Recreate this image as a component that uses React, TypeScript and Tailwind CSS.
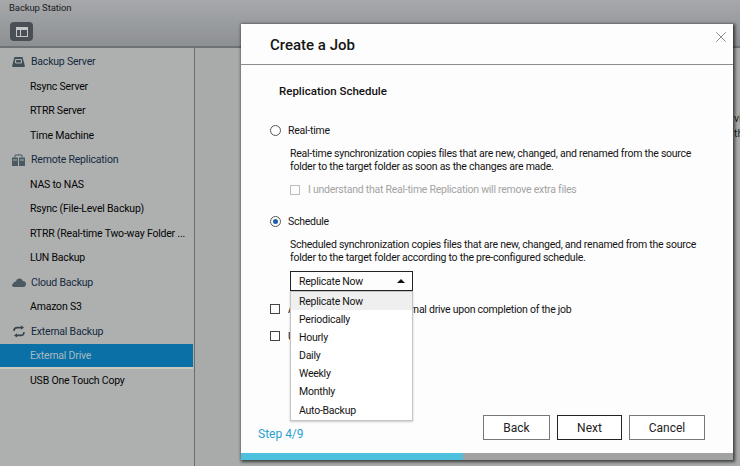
import { X } from "lucide-react";

const font = "font-['Roboto',sans-serif]";

function ServerIcon() {
  return (
    <svg width="13" height="10" viewBox="0 0 13 10" fill="none">
      <path d="M2.5 0h8l2.4 9a1 1 0 0 1-1 1H1.1a1 1 0 0 1-1-1z" fill="#3f4d55" />
      <rect x="3" y="2" width="7" height="4.5" rx="1.2" fill="#aeb0b0" />
      <rect x="4" y="3" width="5" height="2.5" rx="0.6" fill="#3f4d55" />
    </svg>
  );
}

function ReplicationIcon() {
  return (
    <svg width="13" height="12" viewBox="0 0 13 12" fill="none">
      <path d="M3 3.5V1h7v2.5M6.5 0v1" stroke="#4b5a62" />
      <rect x="0" y="3.5" width="6" height="8.5" fill="#4b5a62" />
      <rect x="7" y="3.5" width="6" height="8.5" fill="#4b5a62" />
      <path d="M1 6h4M8 6h4" stroke="#aeb0b0" />
    </svg>
  );
}

function CloudIcon() {
  return (
    <svg width="14" height="9" viewBox="0 0 14 9">
      <path
        d="M1.8 9A1.8 1.8 0 0 1 1.3 5.5 2.6 2.6 0 0 1 4 3.4 3.6 3.6 0 0 1 7.5.5c1.8 0 3 1 3.4 2.6A3 3 0 0 1 14 6.4 2.6 2.6 0 0 1 12 9z"
        fill="#4b5a62"
      />
    </svg>
  );
}

function SyncIcon() {
  return (
    <svg width="12" height="13" viewBox="0 0 12 13" fill="none" stroke="#39444a" strokeWidth="1.6">
      <path d="M1 6c0-2 1.4-3.4 3.4-3.4H9" />
      <path d="M8 .4l3 2.2-3 2.2z" fill="#39444a" stroke="none" />
      <path d="M11 7c0 2-1.4 3.4-3.4 3.4H3" />
      <path d="M4 8.2l-3 2.2 3 2.2z" fill="#39444a" stroke="none" />
    </svg>
  );
}

function GroupRow({ icon, label }: { icon: React.ReactNode; label: string }) {
  return (
    <div className="flex h-[24.5px] items-center whitespace-nowrap text-[10.5px] tracking-[-0.2px] text-[#14293d]">
      <span className="flex w-[31px] justify-center pl-[6px]">{icon}</span>
      {label}
    </div>
  );
}

function ItemRow({ label, active }: { label: string; active?: boolean }) {
  return (
    <div
      className={
        active
          ? "mr-[1px] flex h-[25px] items-center whitespace-nowrap border-b-2 border-[#c9c9bd] bg-[#0a70a6] pl-[30px] text-[10.5px] tracking-[-0.2px] text-[#a9b9c0]"
          : "flex h-[24.5px] items-center whitespace-nowrap pl-[30px] text-[10.5px] tracking-[-0.2px] text-[#050505]"
      }
    >
      {label}
    </div>
  );
}

function Radio({ checked }: { checked?: boolean }) {
  return (
    <span className="flex h-[11px] w-[11px] items-center justify-center rounded-full border border-[#555] bg-white">
      {checked && <span className="h-[5px] w-[5px] rounded-full bg-[#1f5fa8]" />}
    </span>
  );
}

function FooterButton({ label, strong, width }: { label: string; strong?: boolean; width: string }) {
  return (
    <button
      type="button"
      className={`h-[25px] ${width} border bg-white text-[12px] text-[#222] ${
        strong ? "border-[#222]" : "border-[#777]"
      }`}
    >
      {label}
    </button>
  );
}

const scheduleOptions = ["Periodically", "Hourly", "Daily", "Weekly", "Monthly", "Auto-Backup"];

export default function App() {
  return (
    <div className={`relative flex h-[466px] w-[740px] flex-col overflow-hidden bg-[#aeb0b0] ${font}`}>
      {/* Title bar */}
      <div className="flex h-[48px] shrink-0 flex-col border-b-2 border-[#6f7274] bg-gradient-to-b from-[#a6a8ab] to-[#8d9093] pl-[9px]">
        <div className="pt-[1px] text-[9.5px] leading-[13px] tracking-[-0.1px] text-[#1c1c1c]">Backup Station</div>
        <div className="ml-[1px] mt-[8px] flex h-[19px] w-[23px] items-center justify-center rounded-[4px] bg-[#4a4f55]">
          <span className="flex h-[10px] w-[12px] flex-col border border-[#c4c6c8]">
            <span className="h-[2px] w-full shrink-0 bg-[#c4c6c8]" />
            <span className="w-[4px] flex-1 border-r border-[#c4c6c8]" />
          </span>
        </div>
      </div>

      {/* Sidebar and page behind the dialog */}
      <div className="flex min-h-0 flex-1">
        <div className="w-[195px] shrink-0 border-r border-[#6c6e6e] pt-[2px]">
          <GroupRow icon={<ServerIcon />} label="Backup Server" />
          <ItemRow label="Rsync Server" />
          <ItemRow label="RTRR Server" />
          <ItemRow label="Time Machine" />
          <GroupRow icon={<ReplicationIcon />} label="Remote Replication" />
          <ItemRow label="NAS to NAS" />
          <ItemRow label="Rsync (File-Level Backup)" />
          <ItemRow label="RTRR (Real-time Two-way Folder ..." />
          <ItemRow label="LUN Backup" />
          <GroupRow icon={<CloudIcon />} label="Cloud Backup" />
          <ItemRow label="Amazon S3" />
          <GroupRow icon={<SyncIcon />} label="External Backup" />
          <ItemRow label="External Drive" active />
          <ItemRow label="USB One Touch Copy" />
        </div>
        <div className="flex-1 overflow-hidden whitespace-nowrap bg-[#a9abab] pl-[539px] pt-[63px] text-[10.5px] leading-[15px] text-[#222]">
          <div>view</div>
          <div>the</div>
        </div>
      </div>

      {/* Dialog */}
      <div className="absolute left-[241px] top-[24px] flex h-[436px] w-[492px] flex-col bg-[#fdfdfd] shadow-[1px_1px_3px_1px_rgba(0,0,0,0.65)]">
        <div className="relative flex h-[41px] shrink-0 items-center border-b border-[#8d8d8d] pl-[29px] pt-[2px] text-[15px] font-medium text-[#151515]">
          Create a Job
          <X className="absolute right-[3px] top-[4px] h-[18px] w-[18px] text-[#888]" strokeWidth={1.3} />
        </div>

        <div className="relative flex-1 whitespace-nowrap pl-[29px] pr-[30px] text-[10.5px] leading-[13px] tracking-[-0.25px] text-[#141414]">
          <div className="pl-[9px] pt-[19px] text-[11.5px] font-medium leading-[14px] tracking-normal text-[#111]">
            Replication Schedule
          </div>

          <div className="mt-[25px] flex h-[14px] items-center gap-[7px]">
            <Radio />
            Real-time
          </div>
          <p className="mt-[10px] pl-[20px]">
            Real-time synchronization copies files that are new, changed, and renamed from the source
            <br />
            folder to the target folder as soon as the changes are made.
          </p>
          <div className="mt-[10px] flex items-center gap-[8px] pl-[20px] text-[#a3a3a3]">
            <span className="h-[10px] w-[10px] border border-[#bdbdbd]" />
            I understand that Real-time Replication will remove extra files
          </div>

          <div className="mt-[18px] flex h-[14px] items-center gap-[7px]">
            <Radio checked />
            Schedule
          </div>
          <p className="mt-[10px] pl-[20px]">
            Scheduled synchronization copies files that are new, changed, and renamed from the source
            <br />
            folder to the target folder according to the pre-configured schedule.
          </p>

          <div className="ml-[20px] mt-[7px] flex h-[20px] w-[123px] items-center justify-between border border-[#222] pl-[8px] pr-[7px]">
            Replicate Now
            <span className="h-0 w-0 border-x-[4px] border-b-[4px] border-x-transparent border-b-[#111]" />
          </div>

          <div className="mt-[11px] flex h-[14px] items-center gap-[8px]">
            <span className="h-[10px] w-[10px] border border-[#444]" />
            Automatically eject the external drive upon completion of the job
          </div>
          <div className="mt-[13px] flex h-[14px] items-center gap-[8px]">
            <span className="h-[10px] w-[10px] border border-[#444]" />
            Use
          </div>

          {/* Open dropdown */}
          <div className="absolute left-[49px] top-[226px] w-[123px] border border-[#c4c4c4] bg-white pb-[1px] text-[#141414] shadow-[0_1px_2px_rgba(0,0,0,0.2)]">
            <div className="flex h-[18px] items-center bg-[#efefef] pl-[8px]">Replicate Now</div>
            {scheduleOptions.map((option) => (
              <div key={option} className="flex h-[18.2px] items-center pl-[8px]">
                {option}
              </div>
            ))}
          </div>
        </div>

        <div className="flex h-[45px] shrink-0 items-start justify-between pl-[17px] pr-[28px]">
          <span className="pt-[19px] text-[12px] leading-[14px] text-[#2a9fd0]">Step 4/9</span>
          <div className="flex gap-[7px] pt-[7px]">
            <FooterButton label="Back" width="w-[67px]" />
            <FooterButton label="Next" width="w-[65px]" strong />
            <FooterButton label="Cancel" width="w-[76px]" />
          </div>
        </div>

        {/* Wizard progress */}
        <div className="h-[7px] shrink-0 bg-[#a2a2a2]">
          <div className="h-full w-[222px] bg-[#4cc0dc]" />
        </div>
      </div>
    </div>
  );
}
